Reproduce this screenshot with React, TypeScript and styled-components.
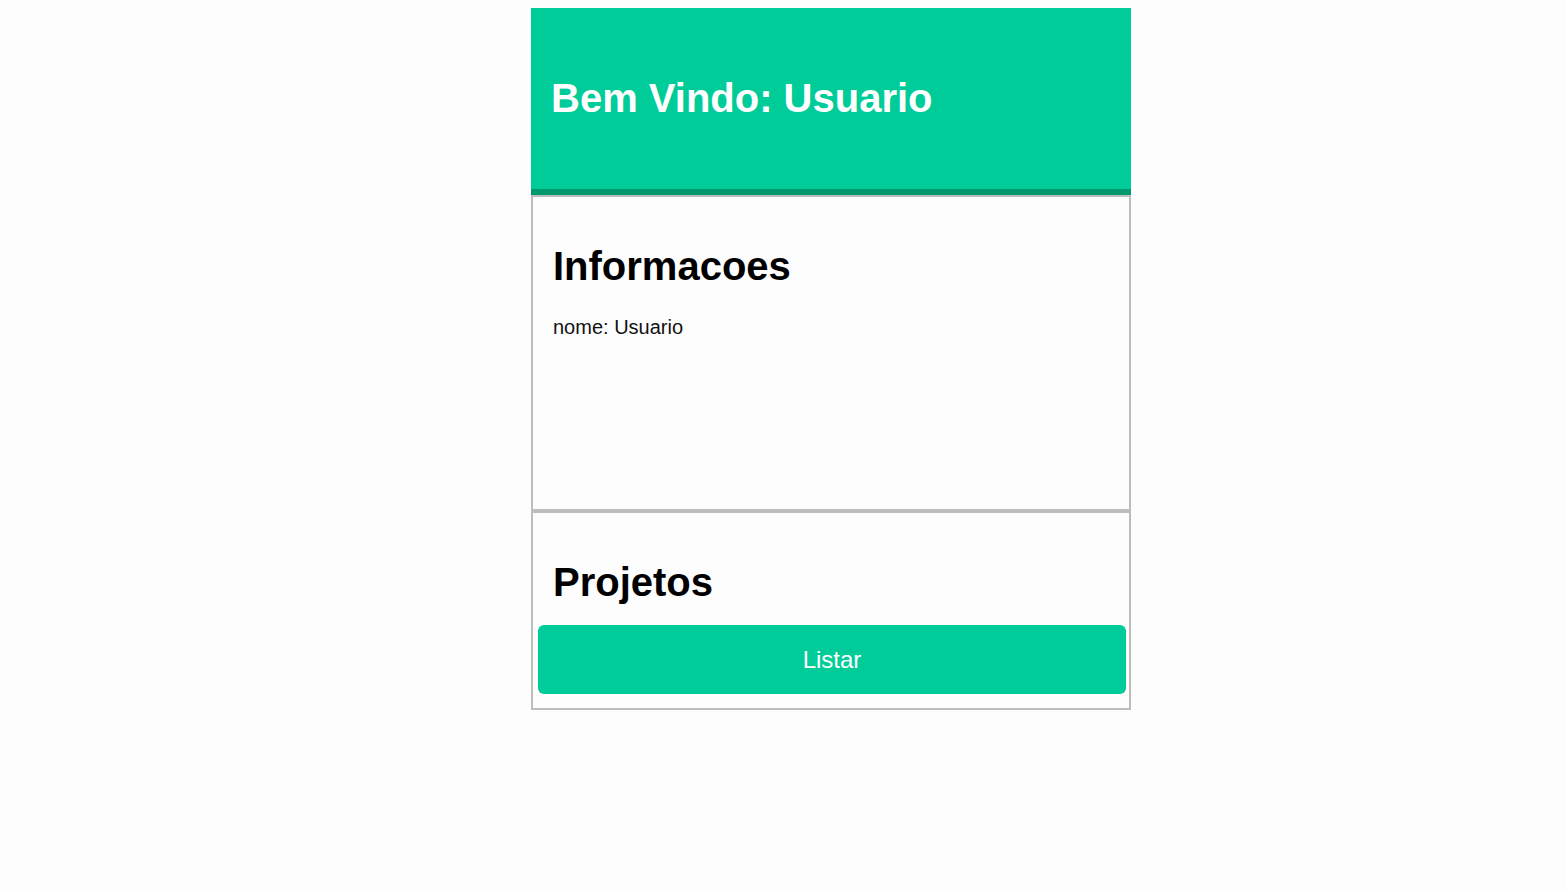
import React from "react";
import styled, { createGlobalStyle } from "styled-components";

const GlobalStyle = createGlobalStyle`
  body {
    margin: 8px;
    background: #fdfdfd;
    font-family: "Liberation Sans", Arial, sans-serif;
  }
`;

const Page = styled.main`
  width: 600px;
  margin-left: 523px;
  display: flex;
  flex-direction: column;
`;

const Header = styled.header`
  height: 181px;
  display: flex;
  align-items: center;
  padding: 0 20px;
  background: #00cc99;
  border-bottom: 6px solid #00996f;
`;

const Welcome = styled.h2`
  margin: 0;
  color: #ffffff;
  font-size: 40px;
  font-weight: 700;
`;

const Card = styled.section<{ $minHeight?: number }>`
  display: flex;
  flex-direction: column;
  border: 2px solid #bdbdbd;
  min-height: ${({ $minHeight }) => ($minHeight ? `${$minHeight}px` : "auto")};
  padding: 0 3px 14px 5px;
`;

const Title = styled.h1`
  margin: 46px 0 0 15px;
  font-size: 40px;
  font-weight: 700;
  line-height: 46px;
  color: #000;
`;

const Info = styled.p`
  margin: 27px 0 0 15px;
  font-size: 20px;
  line-height: 23px;
  color: #111;
`;

const Button = styled.button`
  margin-top: 20px;
  height: 69px;
  border: none;
  border-radius: 6px;
  background: #00cc99;
  color: #ffffff;
  font-family: "Liberation Sans", Arial, sans-serif;
  font-size: 24px;
  cursor: pointer;
`;

export default function App() {
  return (
    <>
      <GlobalStyle />
      <Page>
        <Header>
          <Welcome>Bem Vindo: Usuario</Welcome>
        </Header>
        <Card $minHeight={298}>
          <Title>Informacoes</Title>
          <Info>nome: Usuario</Info>
        </Card>
        <Card>
          <Title>Projetos</Title>
          <Button>Listar</Button>
        </Card>
      </Page>
    </>
  );
}
